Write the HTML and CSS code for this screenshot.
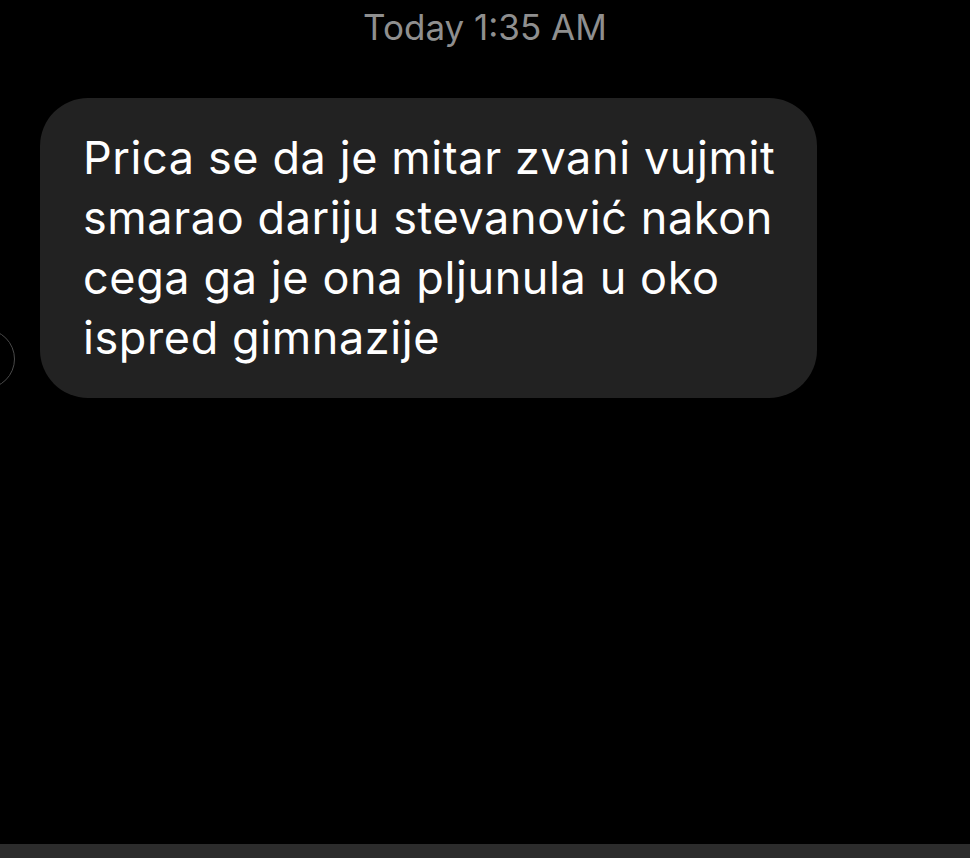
FILE: index.html
```html
<!DOCTYPE html>
<html lang="sr">
<head>
    <meta charset="UTF-8">
    <meta name="viewport" content="width=device-width, initial-scale=1.0">
    <title>Poruke</title>
    <link rel="stylesheet" href="styles.css">
</head>
<body>
    <div class="chat">
        <div class="timestamp">Today 1:35 AM</div>

        <div class="message-row">
            <div class="avatar"></div>
            <div class="bubble">
                Prica se da je mitar zvani vujmit<br>
                smarao dariju stevanović nakon<br>
                cega ga je ona pljunula u oko<br>
                ispred gimnazije
            </div>
        </div>
    </div>

    <div class="bottom-bar"></div>
</body>
</html>
```

FILE: styles.css
```css
body {
    font-family: Inter, "Noto Sans", sans-serif;
    background-color: #000;
    color: white;
    margin: 0;
    padding: 0;
    height: 858px;
    overflow: hidden;
    display: flex;
    flex-direction: column;
}

.chat {
    flex: 1;
}

.timestamp {
    color: #8f8f8f;
    font-size: 35px;
    text-align: center;
    padding-top: 7px;
    height: 40px;
    line-height: 40px;
}

.message-row {
    display: flex;
    align-items: flex-end;
    margin-top: 51px;
}

.avatar {
    width: 58px;
    height: 58px;
    border: 1.5px solid #4a4a4a;
    border-radius: 50%;
    margin-left: -45px;
    margin-bottom: 9px;
    flex-shrink: 0;
}

.bubble {
    background-color: #222222;
    border-radius: 48px;
    margin-left: 25px;
    width: 777px;
    box-sizing: border-box;
    padding: 30px 10px 30px 43px;
    font-size: 45px;
    letter-spacing: 0.6px;
    line-height: 60px;
}

.bottom-bar {
    height: 14px;
    background-color: #2c2c2c;
}
```
